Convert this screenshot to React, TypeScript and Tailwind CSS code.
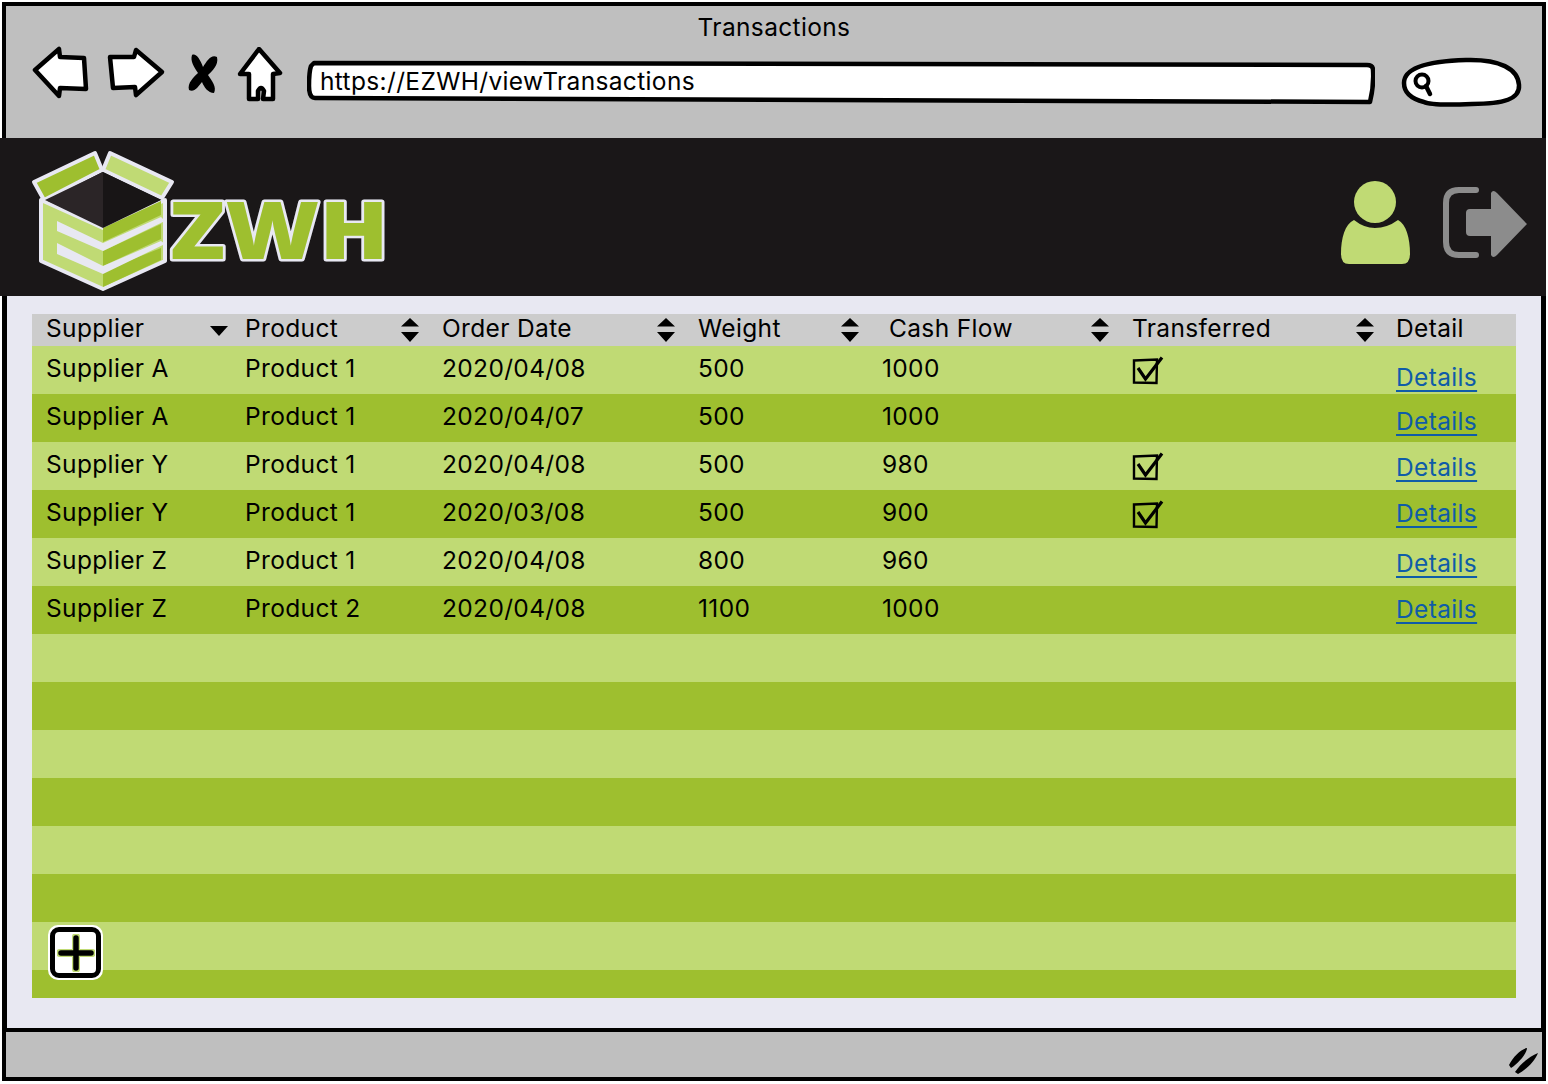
import React from "react";

const cols = "grid grid-cols-[199px_197px_256px_184px_250px_265px_133px]";
const rows = [
  { s: "Supplier A", p: "Product 1", d: "2020/04/08", w: "500", c: "1000", t: true, dt: "pt-[17px]", ct: "pt-[10px]" },
  { s: "Supplier A", p: "Product 1", d: "2020/04/07", w: "500", c: "1000", t: false, dt: "pt-[13px]", ct: "pt-[11px]" },
  { s: "Supplier Y", p: "Product 1", d: "2020/04/08", w: "500", c: "980", t: true, dt: "pt-[11px]", ct: "pt-[10px]" },
  { s: "Supplier Y", p: "Product 1", d: "2020/03/08", w: "500", c: "900", t: true, dt: "pt-[9px]", ct: "pt-[10px]" },
  { s: "Supplier Z", p: "Product 1", d: "2020/04/08", w: "800", c: "960", t: false, dt: "pt-[11px]", ct: "pt-[11px]" },
  { s: "Supplier Z", p: "Product 2", d: "2020/04/08", w: "1100", c: "1000", t: false, dt: "pt-[9px]", ct: "pt-[11px]" },
];
const blanks = [0, 1, 2, 3, 4, 5, 6];
const light = "bg-[#c0da74]";
const dark = "bg-[#9ebf2f]";

function Sort() {
  return (
    <svg width="18" height="24" viewBox="0 0 18 24" className="shrink-0">
      <path d="M9 0 L18 8.5 L0 8.5 Z M0 14 L18 14 L9 24 Z" fill="#000" strokeLinejoin="round" />
    </svg>
  );
}
function Down() {
  return (
    <svg width="18" height="24" viewBox="0 0 18 24" className="shrink-0">
      <path d="M0 8 L18 8 L9 18 Z" fill="#000" />
    </svg>
  );
}
function Head({ label, down, pad = "pl-[14px]", right = "pr-[9px]" }: { label: string; down?: boolean; pad?: string; right?: string }) {
  return (
    <div className={`flex items-start justify-between ${pad} ${right}`}>
      <span>{label}</span>
      <span className="pt-[4px]">{down ? <Down /> : <Sort />}</span>
    </div>
  );
}
function Check() {
  return (
    <svg width="32" height="30" viewBox="0 0 32 30">
      <path d="M2 4.5 L25 3.5 L24.5 27 L2 26.5 Z" fill="none" stroke="#000" strokeWidth="2.4" />
      <path d="M6 12 L13.5 23 L30 1.5" fill="none" stroke="#000" strokeWidth="3.2" />
    </svg>
  );
}

function Logo() {
  return (
    <svg width="400" height="158" viewBox="0 0 400 158" className="block">
      <g transform="translate(0,-138)">
        <g stroke="#e8e8f2" strokeWidth="4" strokeLinejoin="round">
          <path d="M34 182 L95 153 L102 170 L44 200 Z" fill="#9ebf2f" />
          <path d="M110 153 L172 182 L162 198 L103 170 Z" fill="#c0da74" />
          <path d="M41 200 L41 261 L103 289 L165 261 L165 200 L103 228 Z" fill="#c0da74" />
        </g>
        <path d="M103 228 L161 201 L161 215 L103 242 Z" fill="#9ebf2f" />
        <path d="M103 251 L161 224 L161 239 L103 266 Z" fill="#9ebf2f" />
        <path d="M103 271 L161 248 L161 260 L103 287 Z" fill="#9ebf2f" />
        <path d="M57 221 L103 243 L161 217 L165 221 L103 251 L57 231 Z" fill="#e8e8f2" />
        <path d="M57 243 L103 266 L161 241 L165 244 L103 274 L57 254 Z" fill="#e8e8f2" />
        <path d="M45 200 L103 172 L103 228 Z" fill="#2b2527" />
        <path d="M161 200 L103 172 L103 228 Z" fill="#181516" />
        <text
          x="170"
          y="259"
          textLength="219"
          lengthAdjust="spacingAndGlyphs"
          fontFamily="'Open Sans', sans-serif"
          fontWeight="800"
          fontSize="80"
          fill="#9ebf2f"
          stroke="#e8e8f2"
          strokeWidth="5"
          strokeLinejoin="round"
          paintOrder="stroke"
        >
          ZWH
        </text>
      </g>
    </svg>
  );
}

function Toolbar() {
  const s = { fill: "#fff", stroke: "#000", strokeWidth: 4.5, strokeLinejoin: "round" as const };
  return (
    <div className="flex items-start pl-[26px] pt-[4px]">
      <svg width="60" height="54" viewBox="0 0 60 54" className="mt-[3px]">
        <path d="M3 25 L27 4 L28 12 L52 13 L54 44 L28 43 L27 51 Z" {...s} />
      </svg>
      <svg width="60" height="54" viewBox="0 0 60 54" className="ml-[15px] mt-[3px]">
        <path d="M1 12 L25 12 L27 5 L53 27 L27 50 L26 42 L4 43 Z" transform="translate(2,0)" {...s} />
      </svg>
      <svg width="36" height="48" viewBox="0 0 36 48" className="ml-[19px] mt-[9px]">
        <path d="M6 4 C10 2 14 8 17 16 C21 10 25 3 31 6 C33 14 26 20 22 24 C26 30 31 36 28 42 C22 42 18 36 16 31 C12 36 8 42 3 39 C1 32 8 26 12 22 C8 16 4 10 6 4 Z" fill="#000" />
      </svg>
      <svg width="52" height="58" viewBox="0 0 52 58" className="ml-[15px] mt-[5px]">
        <path d="M22 2 L43 26 L36 27 L36 52 L26 52 L27 44 Q24 38 21 44 L21 52 L12 52 L12 27 L3 27 Z" {...s} />
      </svg>
      <div className="relative ml-[18px] mt-[18px] h-[46px] w-[1068px]">
        <svg width="1068" height="46" viewBox="0 0 1068 46" className="absolute inset-0">
          <path d="M7 3 L1060 5 Q1066 5 1066 10 Q1067 26 1063 42 L8 38 Q2 38 2 26 Q2 12 4 6 Z" fill="#fff" stroke="#000" strokeWidth="4.5" strokeLinejoin="round" />
        </svg>
        <span className="absolute left-[13px] top-[3px] leading-[36px]">https://EZWH/viewTransactions</span>
      </div>
      <svg width="124" height="54" viewBox="0 0 124 54" className="ml-[25px] mt-[13px]">
        <path d="M4 28 C4 12 30 6 66 5 C100 4 118 14 119 30 C120 44 104 49 72 49 C50 50 30 50 24 47 C12 44 4 38 4 28 Z" fill="#fff" stroke="#000" strokeWidth="4.5" />
        <circle cx="22" cy="26" r="6.5" fill="none" stroke="#000" strokeWidth="4" />
        <path d="M26 31 L30 39" stroke="#000" strokeWidth="4.5" strokeLinecap="round" />
      </svg>
    </div>
  );
}

export default function App() {
  return (
    <div className="flex h-[1084px] w-[1548px] flex-col bg-white pt-[2px] font-['Inter','Liberation_Sans',sans-serif] text-[24.5px] tracking-[0.35px] text-black">
      <div className="mx-[2px] h-[136px] border-x-[4px] border-t-[4px] border-black bg-[#bfbfbf]">
        <div className="h-[32px] pt-[3px] text-center leading-[36px]">Transactions</div>
        <Toolbar />
      </div>

      <div className="mr-[2px] flex h-[158px] items-start justify-between bg-[#1a1718]">
        <Logo />
        <div className="flex items-start pr-[17px] pt-[42px]">
          <svg width="72" height="86" viewBox="0 0 72 86">
            <circle cx="35" cy="22" r="21" fill="#c0da74" />
            <path d="M14 40 Q24 48 35 48 Q47 48 58 40 C66 44 70 58 70 74 Q70 84 62 84 L9 84 Q1 84 1 74 C1 58 5 44 14 40 Z" fill="#c0da74" />
          </svg>
          <svg width="86" height="72" viewBox="0 0 86 72" className="ml-[31px] mt-[6px]">
            <path d="M33 4 L16 4 Q3 4 3 17 L3 56 Q3 69 16 69 L33 69" fill="none" stroke="#8c8c8c" strokeWidth="6" strokeLinecap="round" />
            <path d="M23 27 Q23 23 27 23 L48 23 L48 7 Q50 3 54 7 L84 38 L54 69 Q50 73 48 69 L48 50 L27 50 Q23 50 23 46 Z" fill="#8c8c8c" />
          </svg>
        </div>
      </div>

      <div className="mx-[2px] flex-1 border-x-[5px] border-black bg-[#e8e8f2] pl-[25px] pr-[25px] pt-[18px]">
        <div className="relative w-[1484px]">
          <div className={`${cols} h-[32px] bg-[#cccccc] leading-[28px]`}>
            <Head label="Supplier" down right="pr-[3px]" />
            <Head label="Product" />
            <Head label="Order Date" />
            <Head label="Weight" />
            <Head label="Cash Flow" pad="pl-[21px]" />
            <Head label="Transferred" />
            <div className="pl-[13px]">Detail</div>
          </div>
          {rows.map((r, i) => (
            <div key={i} className={`${cols} h-[48px] leading-[28px] ${i % 2 ? dark : light}`}>
              <div className="pl-[14px] pt-[8px]">{r.s}</div>
              <div className="pl-[14px] pt-[8px]">{r.p}</div>
              <div className="pl-[14px] pt-[8px]">{r.d}</div>
              <div className="pl-[14px] pt-[8px]">{r.w}</div>
              <div className="pl-[14px] pt-[8px]">{r.c}</div>
              <div className={`pl-[14px] ${r.ct}`}>{r.t ? <Check /> : null}</div>
              <div className={`pl-[13px] ${r.dt}`}>
                <a href="#" className="text-[#0f5ca8] underline decoration-2 underline-offset-[4px]">Details</a>
              </div>
            </div>
          ))}
          {blanks.map((i) => (
            <div key={i} className={`h-[48px] ${i % 2 ? dark : light}`} />
          ))}
          <div className={`h-[28px] ${dark}`} />
          <div className="absolute left-[16px] top-[611px] flex h-[55px] w-[55px] items-center justify-center rounded-[10px] border-[2px] border-white bg-white">
            <div className="flex h-[51px] w-[51px] items-center justify-center rounded-[9px] border-[5px] border-black">
              <svg width="38" height="38" viewBox="0 0 38 38">
                <path d="M19 3 L19 35 M3 19 L35 19" stroke="#c0da74" strokeWidth="8" strokeLinecap="round" />
                <path d="M19 4 L19 34 M4 19 L34 19" stroke="#000" strokeWidth="5.5" strokeLinecap="round" />
              </svg>
            </div>
          </div>
        </div>
      </div>

      <div className="mx-[2px] mb-[3px] flex h-[53px] items-end justify-end border-x-[4px] border-y-[4px] border-black bg-[#bfbfbf] pb-[2px] pr-[1px]">
        <svg width="34" height="32" viewBox="0 0 34 32">
          <path d="M2 22 C6 14 14 6 20 5 C20 10 12 20 4 25 Z M8 29 C14 20 22 14 31 10 C28 18 20 26 11 31 Z" fill="#000" />
        </svg>
      </div>
    </div>
  );
}
